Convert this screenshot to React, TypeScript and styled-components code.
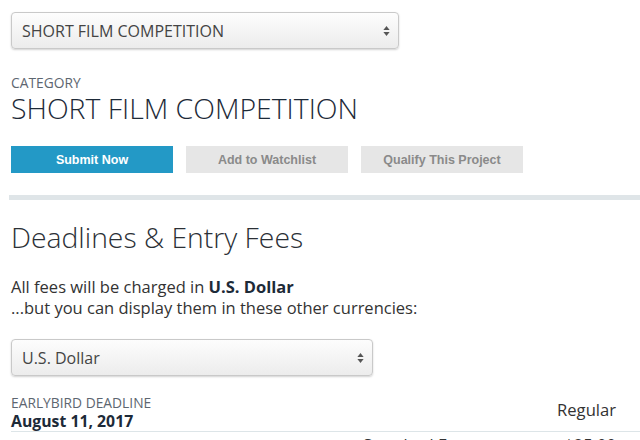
import React from 'react';
import styled, { createGlobalStyle } from 'styled-components';

const GlobalStyle = createGlobalStyle`
  body {
    margin: 0;
    background: #fff;
    font-family: 'Open Sans', 'Liberation Sans', sans-serif;
    color: #333;
  }
`;

// 페이지 전체
const Page = styled.div`
  width: 640px;
  height: 440px;
  overflow: hidden;
  padding-top: 12px;
  box-sizing: border-box;
`;

const Inner = styled.div`
  padding-left: 11px;
`;

// 셀렉트 박스
const SelectBox = styled.div<{ $width: number }>`
  width: ${(p) => p.$width}px;
  height: 37px;
  box-sizing: border-box;
  border: 1px solid #c9c9c9;
  border-radius: 4px;
  background: linear-gradient(#fdfdfd, #ececec);
  box-shadow: 0 1px 2px rgba(0, 0, 0, 0.18);
  display: flex;
  align-items: center;
  justify-content: space-between;
  padding: 0 8px 0 10px;
  font-size: 16px;
  color: #444;
`;

const Arrows = () => (
  <svg width="7" height="10" viewBox="0 0 7 10">
    <polygon points="3.5,0 6.6,3.9 0.4,3.9" fill="#555" />
    <polygon points="0.4,6.1 6.6,6.1 3.5,10" fill="#555" />
  </svg>
);

// 작은 라벨 (CATEGORY, EARLYBIRD DEADLINE)
const SmallLabel = styled.div`
  font-size: 13.8px;
  color: #5d6670;
  text-transform: uppercase;
  line-height: 16px;
`;

const CategoryBlock = styled.div`
  margin-top: 26px;
`;

const BigTitle = styled.h1`
  margin: 1px 0 0 0;
  font-size: 28.4px;
  font-weight: 300;
  color: #1d2a38;
  line-height: 32px;
`;

const ButtonRow = styled.div`
  display: flex;
  gap: 13px;
  margin-top: 22px;
`;

const ActionButton = styled.button<{ $primary?: boolean }>`
  width: 162px;
  height: 27px;
  border: none;
  border-radius: 0;
  font-family: 'Liberation Sans', Arial, sans-serif;
  font-weight: bold;
  font-size: 12.5px;
  cursor: pointer;
  background: ${(p) => (p.$primary ? '#2399c6' : '#e6e6e6')};
  color: ${(p) => (p.$primary ? '#fff' : '#8a8a8a')};
`;

const Divider = styled.div`
  height: 5px;
  background: #dfe5e8;
  margin: 22px 0 0 9px;
`;

const SectionTitle = styled.h2`
  margin: 20px 0 0 0;
  font-size: 28.3px;
  font-weight: 300;
  color: #2b3036;
  line-height: 34px;
`;

const Notice = styled.p`
  margin: 22px 0 0 0;
  font-size: 16.5px;
  line-height: 21px;
  color: #333;
  b {
    color: #1d2a38;
  }
`;

const CurrencyWrap = styled.div`
  margin-top: 21px;
`;

const DeadlineHead = styled.div`
  display: flex;
  justify-content: space-between;
  align-items: flex-end;
  margin-top: 19px;
  padding-right: 24px;
`;

const DeadlineDate = styled.div`
  font-size: 15.8px;
  font-weight: bold;
  color: #1d2a38;
  line-height: 20px;
`;

const ColHead = styled.div`
  font-size: 16.6px;
  color: #333;
  line-height: 20px;
  padding-bottom: 11px;
`;

const FeeRow = styled.div`
  display: grid;
  grid-template-columns: 352px 1fr auto;
  border-top: 1px solid #dde5e8;
  padding: 3px 24px 0 0;
  font-size: 16.6px;
  line-height: 20px;
  color: #333;
`;

const App = () => {
  return (
    <Page>
      <GlobalStyle />
      <Inner>
        <SelectBox $width={388}>
          <span>SHORT FILM COMPETITION</span>
          <Arrows />
        </SelectBox>

        <CategoryBlock>
          <SmallLabel>Category</SmallLabel>
          <BigTitle>SHORT FILM COMPETITION</BigTitle>
        </CategoryBlock>

        <ButtonRow>
          <ActionButton $primary>Submit Now</ActionButton>
          <ActionButton>Add to Watchlist</ActionButton>
          <ActionButton>Qualify This Project</ActionButton>
        </ButtonRow>
      </Inner>

      <Divider />

      <Inner>
        <SectionTitle>Deadlines &amp; Entry Fees</SectionTitle>
        <Notice>
          All fees will be charged in <b>U.S. Dollar</b>
          <br />
          ...but you can display them in these other currencies:
        </Notice>

        <CurrencyWrap>
          <SelectBox $width={362}>
            <span>U.S. Dollar</span>
            <Arrows />
          </SelectBox>
        </CurrencyWrap>

        <DeadlineHead>
          <div>
            <SmallLabel>Earlybird Deadline</SmallLabel>
            <DeadlineDate>August 11, 2017</DeadlineDate>
          </div>
          <ColHead>Regular</ColHead>
        </DeadlineHead>
        <FeeRow>
          <span />
          <span>Standard Fee</span>
          <span>$25.00</span>
        </FeeRow>
      </Inner>
    </Page>
  );
};

export default App;
